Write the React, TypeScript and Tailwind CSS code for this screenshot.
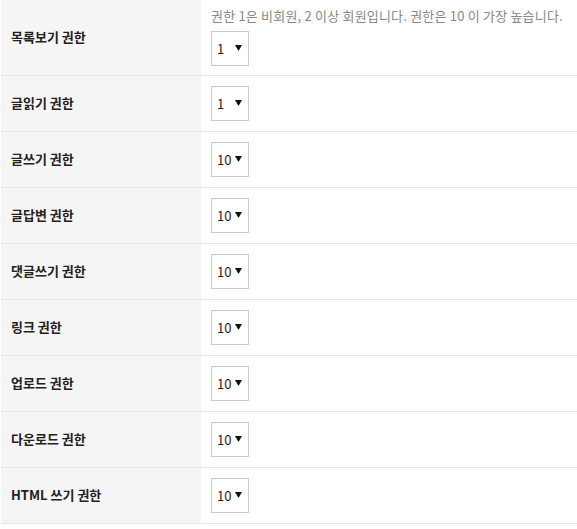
// Board permission settings table (권한 설정)
interface PermRow {
  label: string;
  value: string;
  help?: string;
}

const rows: PermRow[] = [
  { label: '목록보기 권한', value: '1', help: '권한 1은 비회원, 2 이상 회원입니다. 권한은 10 이 가장 높습니다.' },
  { label: '글읽기 권한', value: '1' },
  { label: '글쓰기 권한', value: '10' },
  { label: '글답변 권한', value: '10' },
  { label: '댓글쓰기 권한', value: '10' },
  { label: '링크 권한', value: '10' },
  { label: '업로드 권한', value: '10' },
  { label: '다운로드 권한', value: '10' },
  { label: 'HTML 쓰기 권한', value: '10' },
];

function FakeSelect({ value }: { value: string }) {
  return (
    <div className="flex h-[35px] w-[38px] items-center border border-[#cccccc] bg-white pl-[5px] pr-[6px]">
      <span className="flex-1 text-[13px] leading-none text-[#222]">{value}</span>
      <svg width="7" height="6" viewBox="0 0 7 6" className="mb-[1px]">
        <path d="M0 0H7L3.5 6Z" fill="#111" />
      </svg>
    </div>
  );
}

export default function App() {
  return (
    <div
      className="w-[577px] bg-white pl-[1px]"
      style={{ fontFamily: '"Noto Sans CJK KR", "Noto Sans", sans-serif' }}
    >
      {rows.map((row) => (
        <div
          key={row.label}
          className={`flex border-b border-[#e5e5e5] ${row.help ? 'h-[76px]' : 'h-[56px]'}`}
        >
          <div className="flex w-[200px] shrink-0 items-center bg-[#f5f5f5] pl-[10px] pb-[2px] text-[13px] font-semibold text-[#222]">
            {row.label}
          </div>
          <div className="flex flex-1 flex-col justify-center pl-[10px]">
            {row.help && (
              <p className="mb-[6px] mt-[-3px] text-[13px] leading-[18px] tracking-[0.2px] text-[#888]">
                {row.help}
              </p>
            )}
            <FakeSelect value={row.value} />
          </div>
        </div>
      ))}
    </div>
  );
}
